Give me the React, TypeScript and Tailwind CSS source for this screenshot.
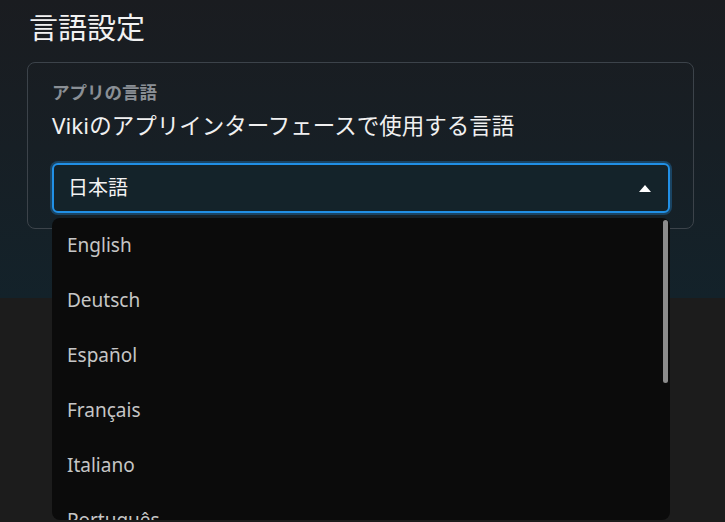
import { useState } from "react";

const languages = [
  "English",
  "Deutsch",
  "Español",
  "Français",
  "Italiano",
  "Português",
  "Nederlands",
];

function CaretUp() {
  return (
    <svg width="12" height="7" viewBox="0 0 12 7" aria-hidden="true">
      <path d="M6 0L12 7H0z" fill="#ffffff" />
    </svg>
  );
}

export default function App() {
  const [value, setValue] = useState("日本語");
  const [open, setOpen] = useState(true);

  return (
    <div className="relative min-h-screen bg-[#1c1c1c] font-['Noto_Sans','Noto_Sans_CJK_JP',sans-serif]">
      <section className="h-[298px] bg-gradient-to-b from-[#1a1c20] to-[#13222a] px-[27px] pt-2">
        <h1 className="pl-[2px] text-[29px] leading-[40px] text-[#f2f2f2]">言語設定</h1>

        <div className="mt-[14px] w-[667px] rounded-lg border border-[#3c434a] pb-[15px] pl-6 pr-[23px] pt-[19px]">
          <p className="text-[17.5px] font-bold leading-5 text-[#8a8f95]">アプリの言語</p>
          <p className="mt-[10px] text-[22.5px] leading-7 text-[#f0f0f0]">
            Vikiのアプリインターフェースで使用する言語
          </p>

          <button
            type="button"
            onClick={() => setOpen(!open)}
            className="mt-[23px] flex h-[50px] w-full items-center justify-between rounded-md border-2 border-[#2190e6] bg-[#14232a] pl-[14px] pr-[17px] shadow-[0_0_0_2px_#1a4463]"
          >
            <span className="text-[20px] text-[#f2f2f2]">{value}</span>
            <CaretUp />
          </button>
        </div>
      </section>

      {open && (
        <div className="absolute left-[52px] top-[218px] h-[302px] w-[618px] overflow-hidden rounded-lg bg-[#0b0b0b]">
          <ul>
            {languages.map((lang) => (
              <li key={lang}>
                <button
                  type="button"
                  onClick={() => {
                    setValue(lang);
                    setOpen(false);
                  }}
                  className="flex h-[55px] w-full items-center pl-[15px] text-[19px] text-[#c6c6c6]"
                >
                  {lang}
                </button>
              </li>
            ))}
          </ul>
          <div className="absolute right-[2px] top-[2px] h-[163px] w-[5px] rounded-full bg-[#8c8c8c]" />
        </div>
      )}
    </div>
  );
}
